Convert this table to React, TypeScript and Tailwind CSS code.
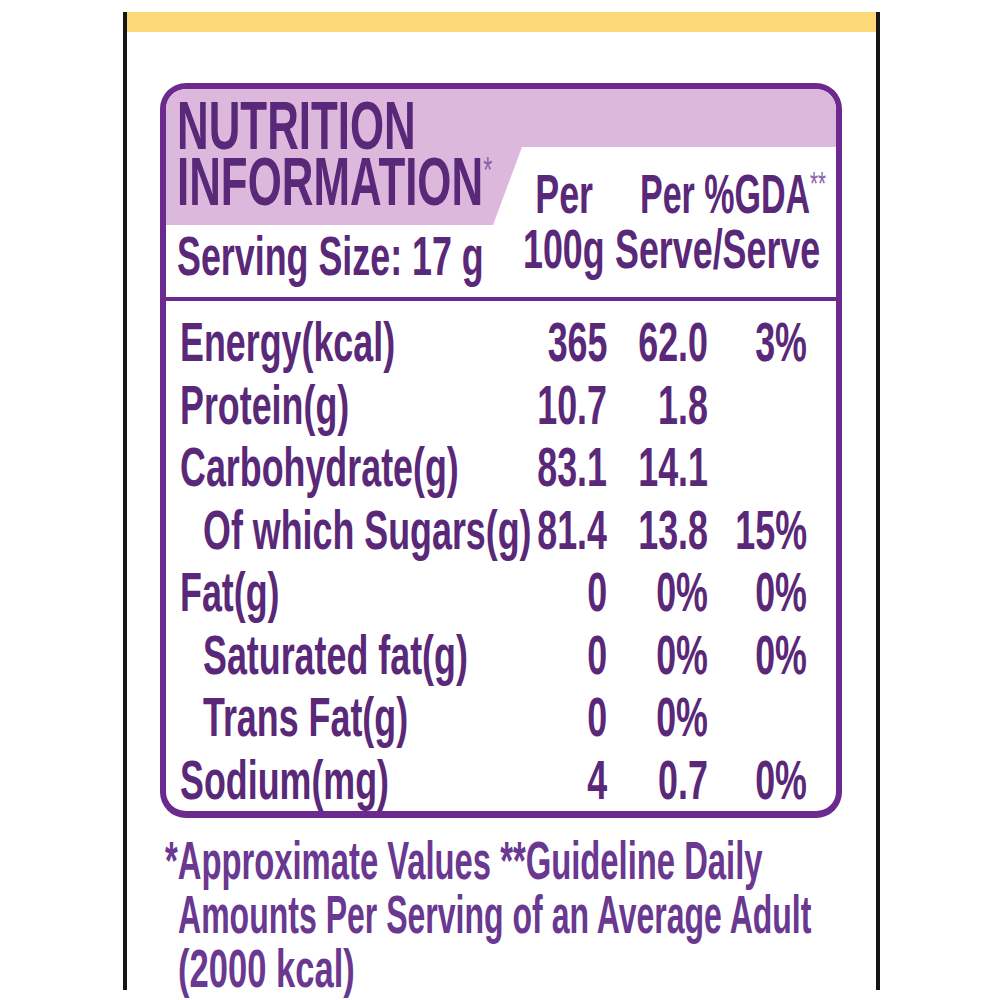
import React from 'react';

const SCALES = {
  s56: 'scale-x-[0.56]',
  s59: 'scale-x-[0.593]',
  s61: 'scale-x-[0.607]',
  s64: 'scale-x-[0.64]',
  s645: 'scale-x-[0.645]',
};

type SxProps = { children: React.ReactNode; o?: 'l' | 'r' | 'c'; s?: keyof typeof SCALES };

function Sx({ children, o = 'l', s = 's64' }: SxProps) {
  const origin = o === 'l' ? 'origin-left' : o === 'r' ? 'origin-right' : 'origin-center';
  return <span className={origin + ' inline-block whitespace-nowrap ' + SCALES[s]}>{children}</span>;
}

type Row = { label: string; indent?: boolean; a: string; b: string; c: string };

const rows: Row[] = [
  { label: 'Energy(kcal)', a: '365', b: '62.0', c: '3%' },
  { label: 'Protein(g)', a: '10.7', b: '1.8', c: '' },
  { label: 'Carbohydrate(g)', a: '83.1', b: '14.1', c: '' },
  { label: 'Of which Sugars(g)', indent: true, a: '81.4', b: '13.8', c: '15%' },
  { label: 'Fat(g)', a: '0', b: '0%', c: '0%' },
  { label: 'Saturated fat(g)', indent: true, a: '0', b: '0%', c: '0%' },
  { label: 'Trans Fat(g)', indent: true, a: '0', b: '0%', c: '' },
  { label: 'Sodium(mg)', a: '4', b: '0.7', c: '0%' },
];

export default function App() {
  return (
    <div className="w-[1000px] h-[1000px] bg-white font-['Liberation_Sans',Arial,sans-serif] font-bold text-[#5a2878] overflow-hidden">
      <div className="ml-[123px] mt-[12px] w-[757px] h-[978px] border-x-[4px] border-[#161616] flex flex-col">
        <div className="shrink-0 h-[20px] bg-[#fcd878]" />
        <div className="shrink-0 ml-[33px] mt-[51px] w-[682px] rounded-[26px] border-[6px] border-b-[7px] border-[#6c2a8e] overflow-hidden">
          {/* header */}
          <div className="relative h-[208px] flex">
            <div className="absolute inset-0 bg-[#dcb9dc] [clip-path:polygon(0px_0px,670px_0px,670px_58px,356px_58px,327px_136px,0px_136px)]" />
            <div className="relative w-[349px] pl-[11px] pt-[8px]">
              <div className="text-[68px] leading-[56px]">
                <Sx s="s645">NUTRITION</Sx>
              </div>
              <div className="text-[68px] leading-[56px]">
                <Sx s="s645">
                  INFORMATION
                  <span className="text-[36px] leading-[0px] align-[22px] text-[#8d5fa8] font-normal">*</span>
                </Sx>
              </div>
              <div className="mt-[19px] text-[56px] leading-[56px]">
                <Sx>Serving Size: 17 g</Sx>
              </div>
            </div>
            <div className="relative flex-1 pt-[77px] grid grid-cols-[92px_1fr] auto-rows-[55px] text-[56px] leading-[55px]">
              <div className="flex justify-center pl-[6px]">
                <Sx o="c">Per</Sx>
              </div>
              <div className="pl-[33px]">
                <Sx s="s61">
                  Per %GDA
                  <span className="text-[34px] leading-[0px] align-[18px] text-[#8d5fa8] font-normal">**</span>
                </Sx>
              </div>
              <div className="flex justify-center pl-[6px]">
                <Sx o="c">100g</Sx>
              </div>
              <div className="pl-[8px]">
                <Sx>Serve/Serve</Sx>
              </div>
            </div>
          </div>
          <div className="h-[4px] bg-[#6c2a8e]" />
          {/* body */}
          <div className="pt-[10px] pl-[14px] grid grid-cols-[335px_92px_101px_99px] auto-rows-[62.5px] text-[56px] leading-[62.5px]">
            {rows.map((r) => (
              <React.Fragment key={r.label}>
                <div className={r.indent ? 'pl-[23px]' : ''}>
                  <Sx>{r.label}</Sx>
                </div>
                <div className="flex justify-end">
                  <Sx o="r">{r.a}</Sx>
                </div>
                <div className="flex justify-end">
                  <Sx o="r">{r.b}</Sx>
                </div>
                <div className="flex justify-end">
                  <Sx o="r">{r.c}</Sx>
                </div>
              </React.Fragment>
            ))}
          </div>
        </div>
        {/* footer */}
        <div className="shrink-0 mt-[15px] pl-[38px] text-[54px] leading-[54px] text-[#6a3890]">
          <div>
            <Sx s="s61">*Approximate Values **Guideline Daily</Sx>
          </div>
          <div className="pl-[13px]">
            <Sx s="s59">Amounts Per Serving of an Average Adult</Sx>
          </div>
          <div className="pl-[13px]">
            <Sx s="s64">(2000 kcal)</Sx>
          </div>
        </div>
      </div>
    </div>
  );
}
